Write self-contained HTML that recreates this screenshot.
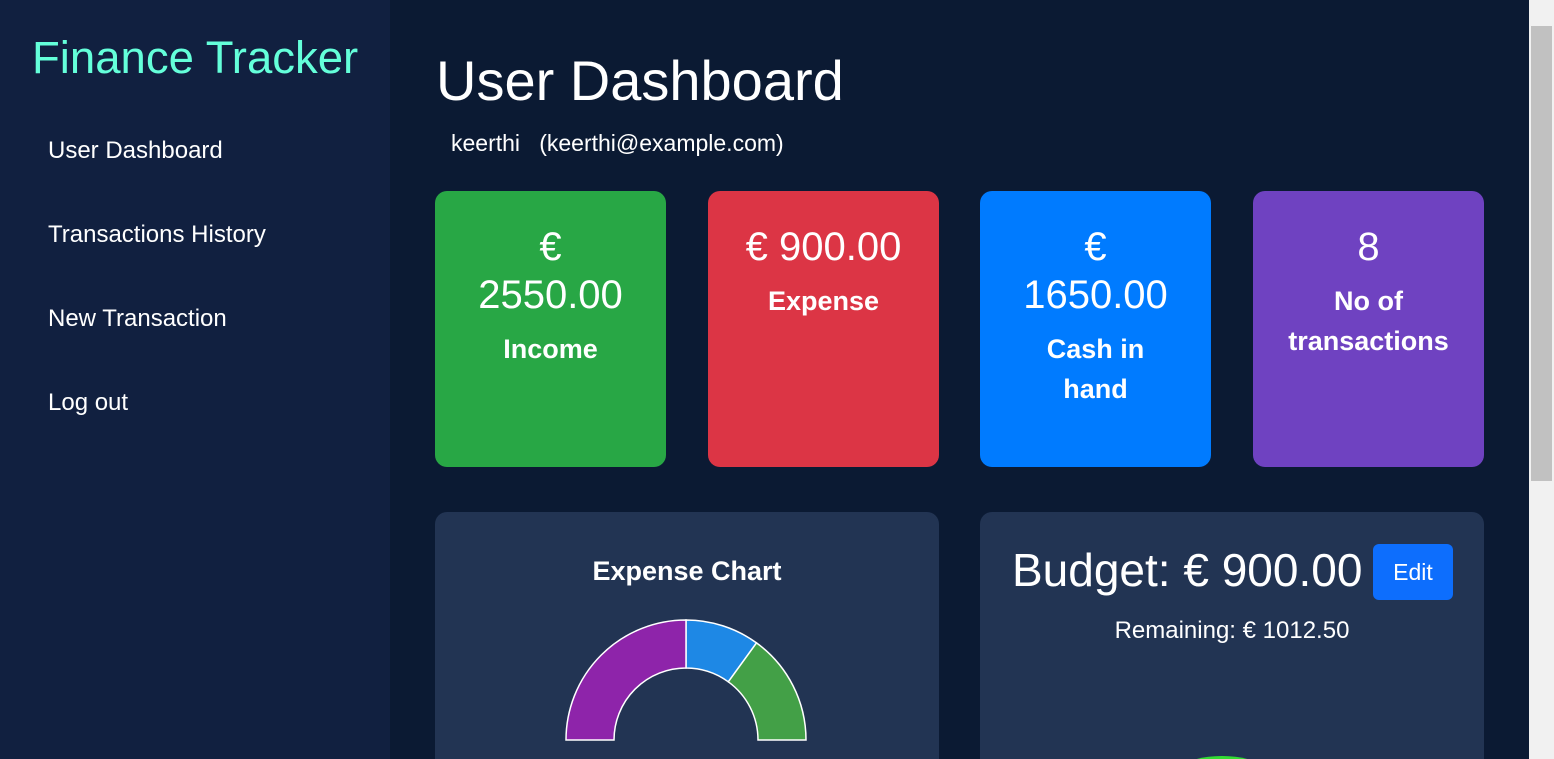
<!DOCTYPE html>
<html><head><style>
*{box-sizing:border-box;margin:0;padding:0}
html,body{width:1554px;height:759px;overflow:hidden}
body{background:#0b1a33;font-family:"Liberation Sans",sans-serif;color:#fff}
#w{position:relative;width:1554px;height:759px;overflow:hidden}
.side{position:absolute;left:0;top:0;width:390px;height:759px;background:#112040}
.side h1{position:absolute;left:32px;top:32px;font-size:45.5px;font-weight:400;color:#64ffda}
.side a{position:absolute;left:48px;font-size:24px;color:#fff;text-decoration:none}
h2{position:absolute;left:436px;top:48px;font-size:56px;font-weight:400}
.user{position:absolute;left:451px;top:130px;font-size:23px}
.card{position:absolute;top:191px;width:231px;height:276px;border-radius:12px;text-align:center}
.card .v{font-size:40px;line-height:48px;margin-top:32px}
.card .l{font-size:27px;font-weight:700;line-height:40px;margin-top:10px}
.panel{position:absolute;top:512px;height:247px;background:#223453;border-radius:12px 12px 0 0;overflow:hidden}
.sb{position:absolute;left:1529px;top:0;width:25px;height:759px;background:#f1f1f1}
.th{position:absolute;left:1531px;top:26px;width:21px;height:455px;background:#c1c1c1}
</style></head><body><div id="w">
<div class="side">
<h1>Finance Tracker</h1>
<a style="top:137px">User Dashboard</a>
<a style="top:221px">Transactions History</a>
<a style="top:305px">New Transaction</a>
<a style="top:389px">Log out</a>
</div>
<h2>User Dashboard</h2>
<div class="user">keerthi&nbsp;&nbsp;&nbsp;(keerthi@example.com)</div>
<div class="card" style="left:435px;background:#28a745"><div class="v">€<br>2550.00</div><div class="l">Income</div></div>
<div class="card" style="left:708px;background:#dc3545"><div class="v">€ 900.00</div><div class="l">Expense</div></div>
<div class="card" style="left:980px;background:#007bff"><div class="v">€<br>1650.00</div><div class="l">Cash in<br>hand</div></div>
<div class="card" style="left:1253px;background:#6f42c1"><div class="v">8</div><div class="l">No of<br>transactions</div></div>
<div class="panel" style="left:435px;width:504px">
<div style="position:absolute;top:44px;width:100%;text-align:center;font-size:27px;font-weight:700">Expense Chart</div>
<svg style="position:absolute;left:0;top:0" width="504" height="300">
<g transform="translate(251,228)" stroke="#fff" stroke-width="1.5">
<path d="M0,-120 A120,120 0 0 1 70.5,-97.1 L42.3,-58.2 A72,72 0 0 0 0,-72 Z" fill="#1e88e5"/>
<path d="M70.5,-97.1 A120,120 0 0 1 120,0 L72,0 A72,72 0 0 0 42.3,-58.2 Z" fill="#43a047"/>
<path d="M-120,0 A120,120 0 0 1 0,-120 L0,-72 A72,72 0 0 0 -72,0 Z" fill="#8e24aa"/>
</g></svg>
</div>
<div class="panel" style="left:980px;width:504px">
<div style="position:absolute;left:32px;top:31px;font-size:46px">Budget: € 900.00</div>
<div style="position:absolute;left:393px;top:32px;width:80px;height:56px;background:#0d6efd;border-radius:6px;font-size:23px;text-align:center;line-height:56px">Edit</div>
<div style="position:absolute;top:105px;width:100%;text-align:center;font-size:24px">Remaining: € 1012.50</div>
<div style="position:absolute;left:207px;top:244px;width:70px;height:20px;border-top:3px solid #3d3;border-radius:50%"></div>
</div>
<div class="sb"></div><div class="th"></div>
</div></body></html>
